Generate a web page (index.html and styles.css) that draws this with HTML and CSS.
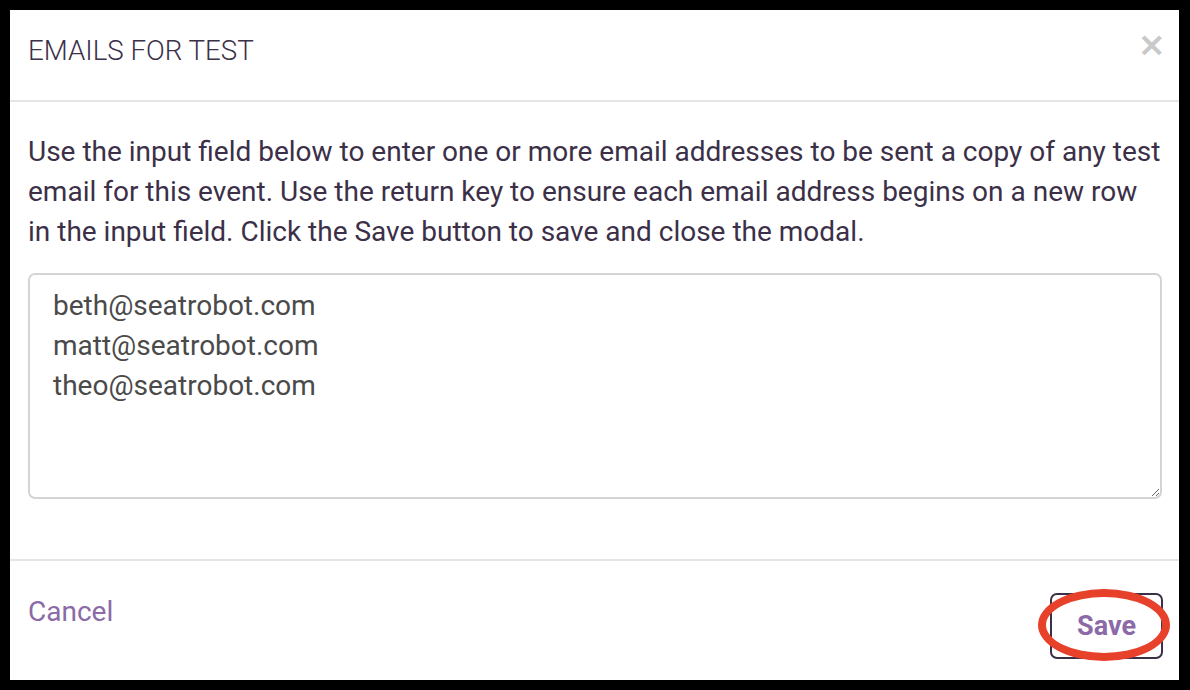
FILE: index.html
```html
<!DOCTYPE html>
<html lang="en">
<head>
  <meta charset="UTF-8" />
  <meta name="viewport" content="width=device-width, initial-scale=1" />
  <title>Emails for Test</title>
  <link rel="stylesheet" href="styles.css">
</head>
<body>
  <div class="modal">
    <div class="modal-header">
      <h2>EMAILS FOR TEST</h2>
      <button class="close">&times;</button>
    </div>

    <div class="modal-body">
      <p>Use the input field below to enter one or more email addresses to be sent a copy of any test email for this event. Use the return key to ensure each email address begins on a new row in the input field. Click the Save button to save and close the modal.</p>
      <textarea id="emails">beth@seatrobot.com
matt@seatrobot.com
theo@seatrobot.com</textarea>
    </div>

    <div class="modal-footer">
      <a href="#" class="cancel">Cancel</a>
      <div class="save-wrap">
        <button class="save">Save</button>
        <span class="highlight"></span>
      </div>
    </div>
  </div>
</body>
</html>
```

FILE: styles.css
```css
html, body {
  margin: 0;
  height: 100%;
}
body {
  background: #000;
  font-family: Roboto, "Liberation Sans", sans-serif;
  padding: 10px 11px 10px 10px;
  box-sizing: border-box;
}
.modal {
  background: #fff;
  height: 670px;
  display: flex;
  flex-direction: column;
}
.modal-header {
  height: 90px;
  border-bottom: 2px solid #e5e5e5;
  display: flex;
  align-items: center;
  justify-content: space-between;
  padding: 0 13px 0 18px;
}
.modal-header h2 {
  margin: 0;
  font-size: 27.7px;
  font-weight: 300;
  color: #3b3048;
  margin-top: -10px;
}
.close {
  border: none;
  background: none;
  padding: 0;
  font-family: "DejaVu Sans", sans-serif;
  font-size: 34px;
  font-weight: bold;
  color: #c9c9c9;
  line-height: 1;
  cursor: pointer;
  margin-top: -22px;
}
.modal-body {
  padding: 30px 17px 60px 18px;
}
.modal-body p {
  margin: 0 0 21px 0;
  font-size: 28px;
  line-height: 40px;
  color: #3b3048;
}
textarea {
  display: block;
  width: 100%;
  height: 226px;
  box-sizing: border-box;
  border: 2px solid #d4d4d4;
  border-radius: 7px;
  padding: 11px 23px;
  font-family: Roboto, "Liberation Sans", sans-serif;
  font-size: 28px;
  line-height: 40px;
  color: #4a4a4a;
  resize: vertical;
  outline: none;
}
.modal-footer {
  border-top: 2px solid #e5e5e5;
  flex: 1;
  display: flex;
  justify-content: space-between;
  align-items: center;
  padding: 0 16px 0 18px;
}
.cancel {
  font-size: 28px;
  color: #8b6aa7;
  text-decoration: none;
  margin-top: -18px;
}
.save-wrap {
  position: relative;
  margin-top: 10px;
}
.save {
  width: 113px;
  height: 66px;
  border: 2px solid #3b3048;
  border-radius: 7px;
  background: #fff;
  font-family: Roboto, "Liberation Sans", sans-serif;
  font-size: 27px;
  font-weight: bold;
  color: #8b6aa7;
  cursor: pointer;
}
.highlight {
  position: absolute;
  left: -12px;
  top: -4px;
  width: 116px;
  height: 56px;
  border: 8px solid #e8412b;
  border-radius: 50%;
  pointer-events: none;
}
```
